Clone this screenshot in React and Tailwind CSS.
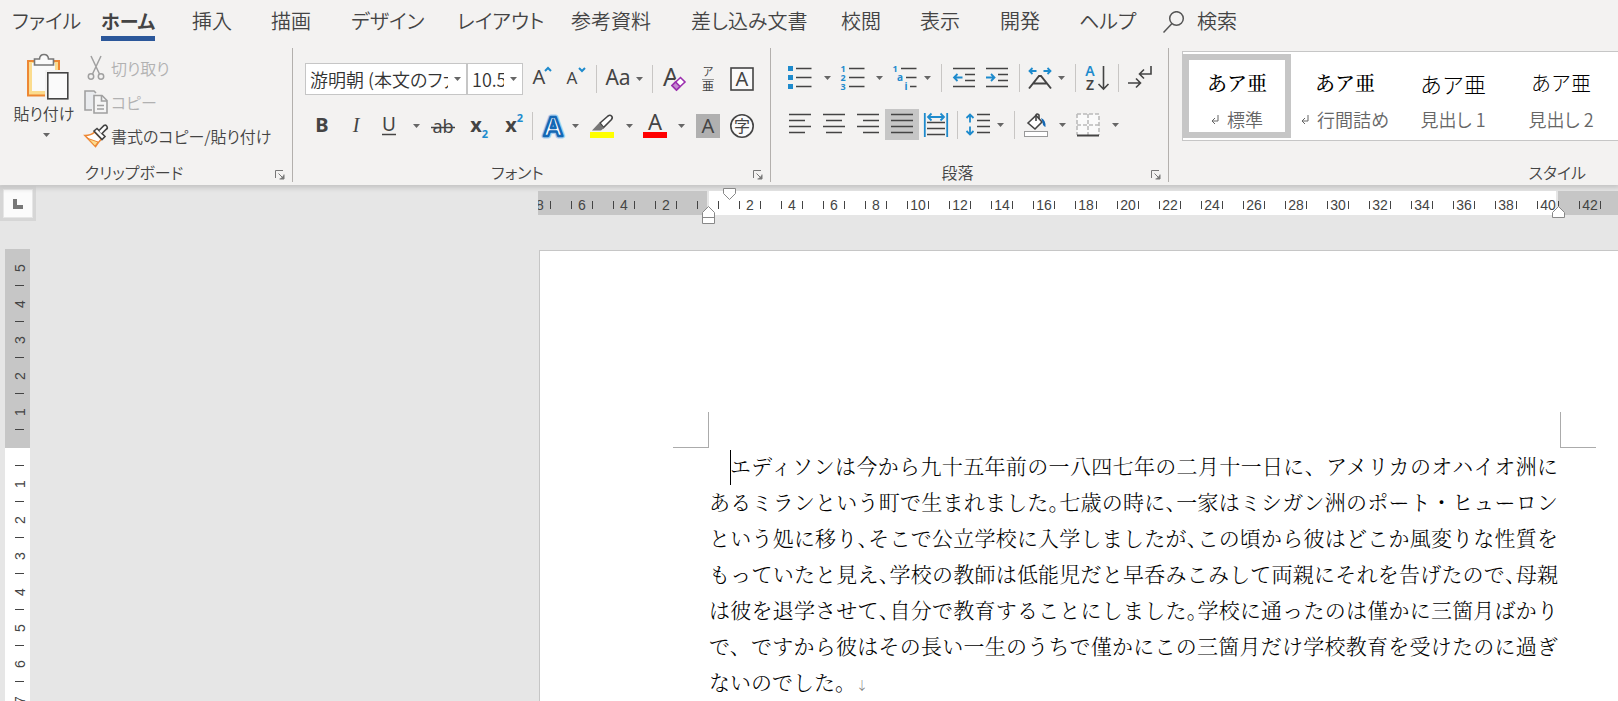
// src/App.jsx

import { useState } from 'react';

const TABS = [
  { label: 'ファイル', width: 'w-[89px]' },
  { label: 'ホーム', width: 'w-[91px]' },
  { label: '挿入', width: 'w-[79px]' },
  { label: '描画', width: 'w-20' },
  { label: 'デザイン', width: 'w-[106px]' },
  { label: 'レイアウト', width: 'w-[114px]' },
  { label: '参考資料', width: 'w-30' },
  { label: '差し込み文書', width: 'w-[150px]' },
  { label: '校閲', width: 'w-[79px]' },
  { label: '表示', width: 'w-20' },
  { label: '開発', width: 'w-[79px]' },
  { label: 'ヘルプ', width: 'w-[84px]' },
];

const STYLES = [
  { name: '標準', mark: true, sample: "text-xl font-medium font-['Noto_Serif_CJK_JP',serif]" },
  { name: '行間詰め', mark: true, sample: "text-xl font-medium font-['Noto_Serif_CJK_JP',serif]" },
  { name: '見出し 1', sample: 'text-[22px] font-light' },
  { name: '見出し 2', sample: 'text-xl font-light' },
];

// tight: 句読点を半角幅に詰める行
const LINES = [
  { text: 'エディソンは今から九十五年前の一八四七年の二月十一日に、アメリカのオハイオ洲に', indent: true },
  { text: 'あるミランという町で生まれました。七歳の時に、一家はミシガン洲のポート・ヒューロン', tight: true },
  { text: 'という処に移り、そこで公立学校に入学しましたが、この頃から彼はどこか風変りな性質を', tight: true },
  { text: 'もっていたと見え、学校の教師は低能児だと早呑みこみして両親にそれを告げたので、母親', tight: true },
  { text: 'は彼を退学させて、自分で教育することにしました。学校に通ったのは僅かに三箇月ばかり', tight: true },
  { text: 'で、ですから彼はその長い一生のうちで僅かにこの三箇月だけ学校教育を受けたのに過ぎ' },
];

const H_MARKS = [8, 6, 4, 2, 0, 2, 4, 6, 8, 10, 12, 14, 16, 18, 20, 22, 24, 26, 28, 30, 32, 34, 36, 38, 40, 42, 44];
const V_MARKS = [5, 4, 3, 2, 1, 0, 1, 2, 3, 4, 5, 6, 7];

const DARK = '#444444';
const BLUE = '#1e8bcd';

const Icon = ({ children, size = 24 }) => (
  <svg
    width={size}
    height={size}
    viewBox={`0 0 ${size} ${size}`}
    fill="none"
    stroke={DARK}
    strokeWidth="1.6"
    className="shrink-0 overflow-visible font-['Noto_Sans','Noto_Sans_CJK_JP',sans-serif]"
  >
    {children}
  </svg>
);

const Glyph = ({ x, y, size, fill = DARK, weight = 400, children, ...rest }) => (
  <text
    x={x}
    y={y}
    fontSize={size}
    fill={fill}
    fontWeight={weight}
    stroke="none"
    textAnchor="middle"
    {...rest}
  >
    {children}
  </text>
);

const Tool = ({ label, width = 'w-[34px]', active, children }) => (
  <button
    type="button"
    aria-label={label}
    className={`${width} h-[31px] shrink-0 flex items-center justify-center ${active ? 'bg-[#c6c6c6]' : 'hover:bg-[#dcdbda]'}`}
  >
    {children}
  </button>
);

const Triangle = () => (
  <svg width="7" height="4" viewBox="0 0 7 4" className="shrink-0">
    <path d="M0 0h7L3.5 4z" fill="#666" />
  </svg>
);

const Drop = ({ label, width = 'w-2.5' }) => (
  <button
    type="button"
    aria-label={`${label}のオプション`}
    className={`${width} h-[31px] shrink-0 flex items-center justify-center`}
  >
    <Triangle />
  </button>
);

const Divider = ({ width = 'w-2' }) => (
  <div className={`${width} shrink-0 flex justify-center`}>
    <div className="w-px h-7 bg-[#c8c6c4]" />
  </div>
);

const Group = ({ label, launcher = true, width, labelClass = 'justify-center', children }) => (
  <section
    aria-label={label}
    className={`${width} flex flex-col h-[134px] ${launcher ? 'shrink-0 border-r border-[#b3b0ad]' : ''}`}
  >
    <div className="h-[114px] shrink-0">{children}</div>

    <div className={`relative flex items-center h-5 leading-5 ${labelClass}`}>
      <span>{label}</span>

      {launcher && (
        <button
          type="button"
          aria-label={`${label}の設定`}
          className="absolute right-[7px] top-2"
        >
          <svg width="10" height="10" viewBox="0 0 10 10" fill="none" stroke="#777">
            <path d="M.5 8V.5H8M3.5 3.5l5 5M9 4.5V9H4.5" />
            <path d="M9 5v4H5z" fill="#777" stroke="none" />
          </svg>
        </button>
      )}
    </div>
  </section>
);

const Clipboard = () => (
  <Group label="クリップボード" width="w-[293px]" labelClass="justify-center pr-6">
    <div className="flex pl-3">

      {/* PASTE */}
      <button type="button" className="w-16 h-24 flex flex-col items-center pt-[5px]">
        <svg width="44" height="48" viewBox="0 0 44 48" fill="none" className="ml-2 shrink-0">
          <rect x="2" y="8" width="31" height="34.5" fill="#fbdc8e" stroke="#ed8733" strokeWidth="2" />
          <rect x="6" y="10" width="23" height="28" fill="#fafafa" />
          <path d="M8.5 12V6h5c.5-6 8.5-6 9 0h5v6z" fill="#fafafa" stroke="#777" strokeWidth="1.6" />
          <rect x="19" y="17" width="25" height="31" fill="#f3f2f1" />
          <rect x="21.8" y="19.8" width="20" height="26" fill="#fafafa" stroke="#444" strokeWidth="1.6" />
        </svg>
        <span className="leading-6 whitespace-nowrap">貼り付け</span>
        <span className="pt-2 pl-1">
          <Triangle />
        </span>
      </button>

      <div className="flex flex-col pl-2 pt-[3px] leading-[34px]">

        {/* CUT */}
        <button type="button" disabled className="flex items-center gap-[3px] text-[#b1b1b1]">
          <Icon>
            <g stroke="#a0a0a0" strokeWidth="1.5">
              <path d="M7 0l8.5 18M17 0L8.5 18" />
              <circle cx="7" cy="20.5" r="2.7" />
              <circle cx="17" cy="20.5" r="2.7" />
            </g>
          </Icon>
          切り取り
        </button>

        {/* COPY */}
        <button type="button" disabled className="flex items-center gap-[3px] text-[#b1b1b1]">
          <Icon>
            <g stroke="#a0a0a0" strokeWidth="1.6">
              <path d="M8 20H1V1h9l2 2" fill="#e9ebee" />
              <path d="M10 5.5h8l5 5V23H10z" fill="#f5f5f5" />
              <path d="M17.5 5.5V11H23M13 15.5h7M13 19h7" />
            </g>
          </Icon>
          コピー
        </button>

        {/* FORMAT PAINTER */}
        <button type="button" className="flex items-center gap-[3px]">
          <Icon>
            <path d="M1 11.5c4 0 7-1 9.5-3.5l7 7c-2 2-4 4.5-6 7.5z" fill="#fff" stroke="#ed8733" />
            <path d="M4 14.5l10 3.5-3 4z" fill="#fbdc8e" stroke="#ed8733" strokeWidth="1" />
            <path d="M10 7l3-2.5 8 8-3 3z" fill="#fff" />
            <path d="M15 6.5l5-5q2-1 3 1t-1 3l-4.5 4.5" fill="#fff" />
          </Icon>
          書式のコピー/貼り付け
        </button>

      </div>

    </div>
  </Group>
);

const Combo = ({ label, value, width }) => (
  <div className={`${width} h-8 shrink-0 flex items-center bg-white border border-[#c6c6c6]`}>
    <input
      type="text"
      aria-label={label}
      defaultValue={value}
      className="flex-1 min-w-0 h-full pl-1 text-lg text-[#333] outline-none"
    />
    <button
      type="button"
      aria-label={`${label}の一覧`}
      className="w-[18px] h-full shrink-0 flex items-center justify-center"
    >
      <Triangle />
    </button>
  </div>
);

const FontGroup = () => (
  <Group label="フォント" width="w-[478px]" labelClass="justify-center pr-7">
    <div className="flex flex-col gap-[15px] pl-3 pt-[15px]">

      {/* ROW 1 */}
      <div className="flex items-center h-8">
        <Combo label="フォント名" value="游明朝 (本文のファ" width="w-[162px]" />
        <Combo label="サイズ" value="10.5" width="w-14" />
        <Tool label="拡大" width="w-[38px]">
          <Icon>
            <Glyph x="9" y="17" size="20">A</Glyph>
            <path d="M15 4l3-3 3 3" stroke={BLUE} strokeWidth="2" />
          </Icon>
        </Tool>
        <Tool label="縮小" width="w-[30px]">
          <Icon>
            <Glyph x="8" y="17" size="17">A</Glyph>
            <path d="M15 1l3 3 3-3" stroke={BLUE} strokeWidth="2" />
          </Icon>
        </Tool>
        <Divider width="w-2.5" />
        <Tool label="文字種の変換">
          <Icon>
            <Glyph x="12" y="18" size="21">Aa</Glyph>
          </Icon>
        </Tool>
        <Drop label="文字種の変換" width="w-2" />
        <Divider width="w-[18px]" />
        <Tool label="書式のクリア" width="w-[26px]">
          <Icon>
            <Glyph x="9" y="19" size="25">A</Glyph>
            <path d="M10 18.5l8.5-8 4.5 4.5-8.5 8z" fill="#fff" stroke="#f3f2f1" strokeWidth="4" />
            <path d="M10 18.5l8.5-8 4.5 4.5-8.5 8z" fill="#fff" stroke="#9b2fae" />
            <path d="M10 18.5l3.5-3.5 4.5 4.5-3.5 3.5z" fill="#c58bd0" stroke="#9b2fae" />
          </Icon>
        </Tool>
        <Tool label="ルビ" width="w-[42px]">
          <Icon>
            <Glyph x="12" y="9" size="11">ア</Glyph>
            <path d="M6 12.5h12" stroke="#999" strokeWidth="1" />
            <Glyph x="12" y="24" size="12">亜</Glyph>
          </Icon>
        </Tool>
        <Tool label="囲み線" width="w-[26px]">
          <Icon>
            <rect x="1" y="1" width="22" height="22" fill="#fafafa" />
            <Glyph x="12" y="19" size="20">A</Glyph>
          </Icon>
        </Tool>
      </div>

      {/* ROW 2 */}
      <div className="flex items-center h-[31px]">
        <Tool label="太字">
          <Icon>
            <Glyph x="12" y="18" size="20" weight="700">B</Glyph>
          </Icon>
        </Tool>
        <Tool label="斜体">
          <Icon>
            <Glyph x="12" y="18" size="20" fontStyle="italic" fontFamily="Liberation Serif, serif">I</Glyph>
          </Icon>
        </Tool>
        <Tool label="下線">
          <Icon>
            <Glyph x="11" y="17" size="19">U</Glyph>
            <path d="M4 20.5h14" strokeWidth="1.5" />
          </Icon>
        </Tool>
        <Drop label="下線" width="w-[19px]" />
        <Tool label="取り消し線">
          <Icon>
            <Glyph x="12" y="19" size="18">ab</Glyph>
            <path d="M0 13.5h24" strokeWidth="1.5" />
          </Icon>
        </Tool>
        <Tool label="下付き">
          <Icon>
            <Glyph x="11" y="18" size="20" weight="700">x</Glyph>
            <Glyph x="20" y="24" size="11" weight="700" fill={BLUE}>2</Glyph>
          </Icon>
        </Tool>
        <Tool label="上付き">
          <Icon>
            <Glyph x="12" y="18" size="20" weight="700">x</Glyph>
            <Glyph x="21" y="8" size="11" weight="700" fill={BLUE}>2</Glyph>
          </Icon>
        </Tool>
        <Divider />
        <Tool label="文字の効果">
          <Icon>
            <g strokeLinejoin="round">
              <text x="12" y="22" fontSize="27" fontWeight="700" textAnchor="middle" fill="#fff" stroke="#a5cdf0" strokeWidth="5">A</text>
              <text x="12" y="22" fontSize="27" fontWeight="700" textAnchor="middle" fill="#fff" stroke="#1468b4" strokeWidth="2.4">A</text>
            </g>
          </Icon>
        </Tool>
        <Drop label="文字の効果" />
        <Tool label="蛍光ペン" width="w-[44px]">
          <Icon>
            <path d="M10 9l8-7q2-1.5 3.5 0t0 3.5l-8 8z" fill="#fff" />
            <path d="M9 9l5 5-3 2.5H2z" fill="#777" stroke="none" />
            <path d="M0 21h24" stroke="#ffff00" strokeWidth="6" />
          </Icon>
        </Tool>
        <Drop label="蛍光ペン" />
        <Tool label="フォントの色" width="w-[42px]">
          <Icon>
            <Glyph x="12" y="16" size="22">A</Glyph>
            <path d="M0 21h24" stroke="#ff0000" strokeWidth="6" />
          </Icon>
        </Tool>
        <Drop label="フォントの色" />
        <Tool label="文字の網かけ" width="w-[44px]">
          <Icon>
            <path d="M0 0h24v24H0z" fill="#b0b0b0" stroke="none" />
            <Glyph x="12" y="19" size="20">A</Glyph>
          </Icon>
        </Tool>
        <Tool label="囲い文字" width="w-6">
          <Icon>
            <circle cx="12" cy="12" r="11.2" fill="#fafafa" />
            <Glyph x="12" y="18" size="16">字</Glyph>
          </Icon>
        </Tool>
      </div>

    </div>
  </Group>
);

const ParagraphGroup = () => (
  <Group label="段落" width="w-[398px]" labelClass="justify-center pr-6">
    <div className="flex flex-col gap-[15px] pl-3 pt-3.5">

      {/* ROW 1 */}
      <div className="flex items-center h-8">
        <Tool label="箇条書き">
          <Icon>
            <path d="M0 0h5v5H0zM0 9h5v5H0zM0 18h5v5H0z" fill={BLUE} stroke="none" />
            <path d="M8 2.5h15.5M8 11.5h15.5M8 20.5h15.5" />
          </Icon>
        </Tool>
        <Drop label="箇条書き" width="w-5" />
        <Tool label="段落番号" width="w-8">
          <Icon>
            <Glyph x="2" y="6" size="9" weight="700" fill={BLUE}>1</Glyph>
            <Glyph x="2" y="15" size="9" weight="700" fill={BLUE}>2</Glyph>
            <Glyph x="2" y="24" size="9" weight="700" fill={BLUE}>3</Glyph>
            <path d="M8 2.5h15.5M8 11.5h15.5M8 20.5h15.5" />
          </Icon>
        </Tool>
        <Drop label="段落番号" width="w-5" />
        <Tool label="アウトライン" width="w-8">
          <Icon>
            <Glyph x="2" y="6" size="9" weight="700" fill={BLUE}>1</Glyph>
            <Glyph x="7" y="15" size="10" weight="700" fill={BLUE}>a</Glyph>
            <Glyph x="13" y="24" size="10" weight="700" fill={BLUE}>i</Glyph>
            <path d="M8 2.5h15.5M13 11.5h10.5M17 20.5h6.5" />
          </Icon>
        </Tool>
        <Drop label="アウトライン" width="w-3" />
        <Divider width="w-4" />
        <Tool label="インデントを減らす" width="w-[30px]">
          <Icon>
            <path d="M1 2.5h22M13 8.5h10M13 14.5h10M1 20.5h22" />
            <path d="M10.5 11.5H2M5.5 8L2 11.5 5.5 15" stroke={BLUE} strokeWidth="1.8" />
          </Icon>
        </Tool>
        <Tool label="インデントを増やす" width="w-9">
          <Icon>
            <path d="M1 2.5h22M13 8.5h10M13 14.5h10M1 20.5h22" />
            <path d="M1 11.5h8.5M6 8l3.5 3.5L6 15" stroke={BLUE} strokeWidth="1.8" />
          </Icon>
        </Tool>
        <Divider />
        <Tool label="拡張書式">
          <Icon>
            <path d="M1 22.5L11 10h2l10 12.5M5.5 17.5h13" strokeWidth="2" />
            <path d="M8.5 5H1.5M4.5 2l-3 3 3 3M15.5 5h7M19.5 2l3 3-3 3" stroke={BLUE} strokeWidth="1.8" />
          </Icon>
        </Tool>
        <Drop label="拡張書式" width="w-2" />
        <Divider width="w-5" />
        <Tool label="並べ替え" width="w-6">
          <Icon>
            <Glyph x="5" y="10" size="14" weight="600" fill={BLUE}>A</Glyph>
            <Glyph x="5" y="24" size="14" weight="600">Z</Glyph>
            <path d="M18.5 0v22.5M13.5 18l5 5 5-5" />
          </Icon>
        </Tool>
        <Divider width="w-[18px]" />
        <Tool label="編集記号" width="w-[26px]">
          <Icon>
            <path d="M23 0v8H12M16 3.5L11.5 8l4.5 4.5M0 17h12M8 12.5l4.5 4.5L8 21.5" />
          </Icon>
        </Tool>
      </div>

      {/* ROW 2 */}
      <div className="flex items-center h-[31px]">
        <Tool label="左揃え">
          <Icon>
            <path d="M1 1.5h22M1 7.5h16M1 13.5h22M1 19.5h16" />
          </Icon>
        </Tool>
        <Tool label="中央揃え">
          <Icon>
            <path d="M1 1.5h22M4 7.5h16M1 13.5h22M4 19.5h16" />
          </Icon>
        </Tool>
        <Tool label="右揃え">
          <Icon>
            <path d="M1 1.5h22M7 7.5h16M1 13.5h22M7 19.5h16" />
          </Icon>
        </Tool>
        <Tool label="両端揃え" active>
          <Icon>
            <path d="M1 1.5h22M1 7.5h22M1 13.5h22M1 19.5h22" />
          </Icon>
        </Tool>
        <Tool label="均等割り付け">
          <Icon>
            <path d="M3 9.5h18M3 15.5h18M3 21.5h18" />
            <path d="M.8 0v24M23.2 0v24M4 4h16M7.5.5L4 4l3.5 3.5M16.5.5L20 4l-3.5 3.5" stroke={BLUE} strokeWidth="1.8" />
          </Icon>
        </Tool>
        <Divider />
        <Tool label="行間">
          <Icon>
            <path d="M11 1.5h13M11 7.5h13M11 13.5h13M11 19.5h13" />
            <path d="M4 1.5v8M.5 5L4 1.5 7.5 5M4 13.5v8M.5 18L4 21.5 7.5 18" stroke={BLUE} strokeWidth="1.8" />
          </Icon>
        </Tool>
        <Drop label="行間" />
        <Divider width="w-[19px]" />
        <Tool label="塗りつぶし" width="w-6">
          <Icon>
            <path d="M4 10l8-7.5 6 6.5-7 7z" fill="#fff" />
            <path d="M12 8V2q1-2 3 0v4" />
            <path d="M17 5q5 2 4.5 9-3-1-3-5z" fill="#1468b4" stroke="none" />
            <rect x=".5" y="18.5" width="23" height="5" fill="#fff" stroke="#999" strokeWidth="1" />
          </Icon>
        </Tool>
        <Drop label="塗りつぶし" width="w-7" />
        <Tool label="罫線" width="w-6">
          <Icon>
            <path d="M1 1h22v22H1z" fill="#fafafa" stroke="none" />
            <path d="M1 1h22v21M1 1v21M1 12h22M12 1v21" stroke="#bbb" strokeDasharray="4 2" />
            <path d="M1 22.5h22" strokeWidth="2" />
          </Icon>
        </Tool>
        <Drop label="罫線" width="w-[30px]" />
      </div>

    </div>
  </Group>
);

const StyleGroup = () => {
  const [selected, setSelected] = useState('標準');

  return (
    <Group label="スタイル" launcher={false} width="flex-1 min-w-0" labelClass="justify-end pr-8">
      <div className="pl-[13px] pt-[3px]">
        <div className="flex items-center h-[90px] overflow-hidden bg-white border border-r-0 border-[#c6c6c6]">
          {STYLES.map((item) => (
            <button
              key={item.name}
              type="button"
              onClick={() => setSelected(item.name)}
              className={`w-27 h-21 shrink-0 flex flex-col items-center border-6 ${selected === item.name ? 'border-[#c6c6c6]' : 'border-transparent'}`}
            >
              <span className={`pt-[7px] leading-8 text-black [font-feature-settings:normal] ${item.sample}`}>
                あア亜
              </span>
              <span className="flex items-center gap-2 mt-2 text-lg leading-6 text-[#666] whitespace-nowrap">
                {item.mark && (
                  <svg width="8" height="9" viewBox="0 0 8 9" fill="none" stroke="#666">
                    <path d="M7 0v6H1.5M4 3L1 6l3 3" />
                  </svg>
                )}
                {item.name}
              </span>
            </button>
          ))}
        </div>
      </div>
    </Group>
  );
};

const HorizontalRuler = () => (
  <div className="relative h-6">

    {/* MARGIN BANDS */}
    <div className="absolute inset-0 flex gap-0.5">
      <div className="w-[169px] bg-[#c6c6c6]" />
      <div className="w-[847px] bg-white" />
      <div className="flex-1 bg-[#c6c6c6]" />
    </div>

    <div className="relative h-full overflow-hidden">
      <div className="flex items-center h-full -ml-[19px]">
        {H_MARKS.map((mark, i) => (
          <div
            key={i}
            className="w-[42px] shrink-0 flex items-center px-2.5 pt-1 font-['Liberation_Sans',sans-serif] text-sm leading-5"
          >
            <div className="w-px h-2 bg-[#444]" />
            <span className="flex-1 w-0 flex justify-center">{mark || ''}</span>
            <div className="w-px h-2 bg-[#444]" />
          </div>
        ))}
      </div>
    </div>

    {/* INDENT MARKERS */}
    <svg width="13" height="13" viewBox="0 0 13 13" className="absolute left-[185px] -top-[3px]">
      <path d="M.5.5h12v5l-6 6-6-6z" fill="#fff" stroke="#888" />
    </svg>
    <svg width="13" height="18" viewBox="0 0 13 18" className="absolute left-[164px] top-[15px]">
      <path d="M.5 17.5v-11l6-6 6 6v11zM.5 11.5h12" fill="#fff" stroke="#888" />
    </svg>
    <svg width="13" height="12" viewBox="0 0 13 12" className="absolute left-[1014px] top-[15px]">
      <path d="M.5 11.5v-5l6-6 6 6v5z" fill="#fff" stroke="#888" />
    </svg>

  </div>
);

const VerticalRuler = () => (
  <div className="flex flex-col w-[25px] ml-[5px] mt-7 pt-px bg-[#c6c6c6] font-['Liberation_Sans',sans-serif] text-sm">
    {V_MARKS.map((mark, i) => (
      <div
        key={i}
        className={`h-9 shrink-0 flex flex-col items-center ${i < 5 ? '' : mark ? 'bg-white' : 'bg-linear-to-b from-[#c6c6c6] from-50% to-white to-50%'}`}
      >
        <span className="flex-1 flex items-center pl-[5px]">
          <span className="-rotate-90">{mark || ''}</span>
        </span>
        <span className="w-[9px] h-px ml-1 bg-[#444]" />
      </div>
    ))}
  </div>
);

const BodyLine = ({ line }) => {
  const parts = line.tight ? line.text.split(/([、。])/) : [line.text];

  return (
    <p className={`[text-align-last:justify] whitespace-nowrap ${line.indent ? 'relative pl-[21px]' : ''}`}>
      {line.indent && (
        <span className="absolute left-[21px] top-[3px] w-px h-[35px] bg-black" />
      )}
      {parts.map((part, i) => (
        part === '、' || part === '。'
          ? <span key={i} className="[font-feature-settings:'halt']">{part}</span>
          : part
      ))}
    </p>
  );
};

const DocumentPage = () => (
  <div className="flex-1 mt-[35px] ml-px overflow-hidden bg-white border-l border-t border-[#c6c6c6]">

    {/* CROP MARKS */}
    <div className="flex justify-start gap-[851px] pl-[133px] pt-[161px]">
      <div className="size-9 shrink-0 border-r border-b border-[#ababab]" />
      <div className="size-9 shrink-0 border-l border-b border-[#ababab]" />
    </div>

    <div
      lang="ja"
      className="w-[849px] ml-[169px] -mt-px font-['Noto_Serif_CJK_JP','Noto_Sans_CJK_JP',serif] [font-feature-settings:normal] font-light text-[21px] leading-9 text-black"
    >
      {LINES.map((line) => (
        <BodyLine key={line.text} line={line} />
      ))}
      <p>
        ないのでした。
        <span className="text-xs text-[#666]">↓</span>
      </p>
    </div>

  </div>
);

const App = () => {
  const [tab, setTab] = useState('ホーム');

  return (
    <div
      lang="ja"
      className="flex flex-col h-screen overflow-hidden bg-[#e6e6e6] text-[#444] font-['Noto_Sans_CJK_JP',sans-serif] font-[350] [font-feature-settings:'palt']"
    >

      {/* TABS */}
      <nav className="relative z-10 flex h-12 shrink-0 pl-3 bg-[#f3f2f1] text-xl leading-9">
        {TABS.map(({ label, width }) => (
          <button
            key={label}
            type="button"
            onClick={() => setTab(label)}
            className={`${width} shrink-0 flex items-start pt-[3px] whitespace-nowrap`}
          >
            <span className={tab === label ? 'h-[38px] border-b-5 border-[#2b579a] text-[19px] font-bold leading-9' : ''}>
              {label}
            </span>
          </button>
        ))}
        <button type="button" className="flex items-start gap-3 pt-[3px] whitespace-nowrap">
          <svg width="22" height="22" viewBox="0 0 22 22" fill="none" stroke="#555" strokeWidth="1.5" className="mt-2">
            <circle cx="13.5" cy="7.5" r="6.8" />
            <path d="M9 12.5L.5 21.5" />
          </svg>
          検索
        </button>
      </nav>

      {/* RIBBON */}
      <div className="relative flex h-[137px] shrink-0 bg-[#f3f2f1] shadow-[0_1px_5px_2px_#c4c4c4]">
        <Clipboard />
        <FontGroup />
        <ParagraphGroup />
        <StyleGroup />
      </div>

      {/* WORKSPACE */}
      <main className="flex flex-1 min-h-0 overflow-hidden">
        <div className="w-9 shrink-0 mt-px">
          <div className="h-[35px] p-[3px] bg-[#d6d6d6]">
            <button
              type="button"
              aria-label="タブの種類"
              className="size-full flex items-center justify-center bg-[#fbfbfb] border border-[#e6e6e6]"
            >
              <svg width="10" height="10" viewBox="0 0 10 10">
                <path d="M0 0h4v6h6v4H0z" fill="#777" />
              </svg>
            </button>
          </div>
          <VerticalRuler />
        </div>

        <div className="flex-1 min-w-0 flex flex-col ml-[502px] pt-1.5">
          <HorizontalRuler />
          <DocumentPage />
        </div>
      </main>

    </div>
  );
};

export default App;
